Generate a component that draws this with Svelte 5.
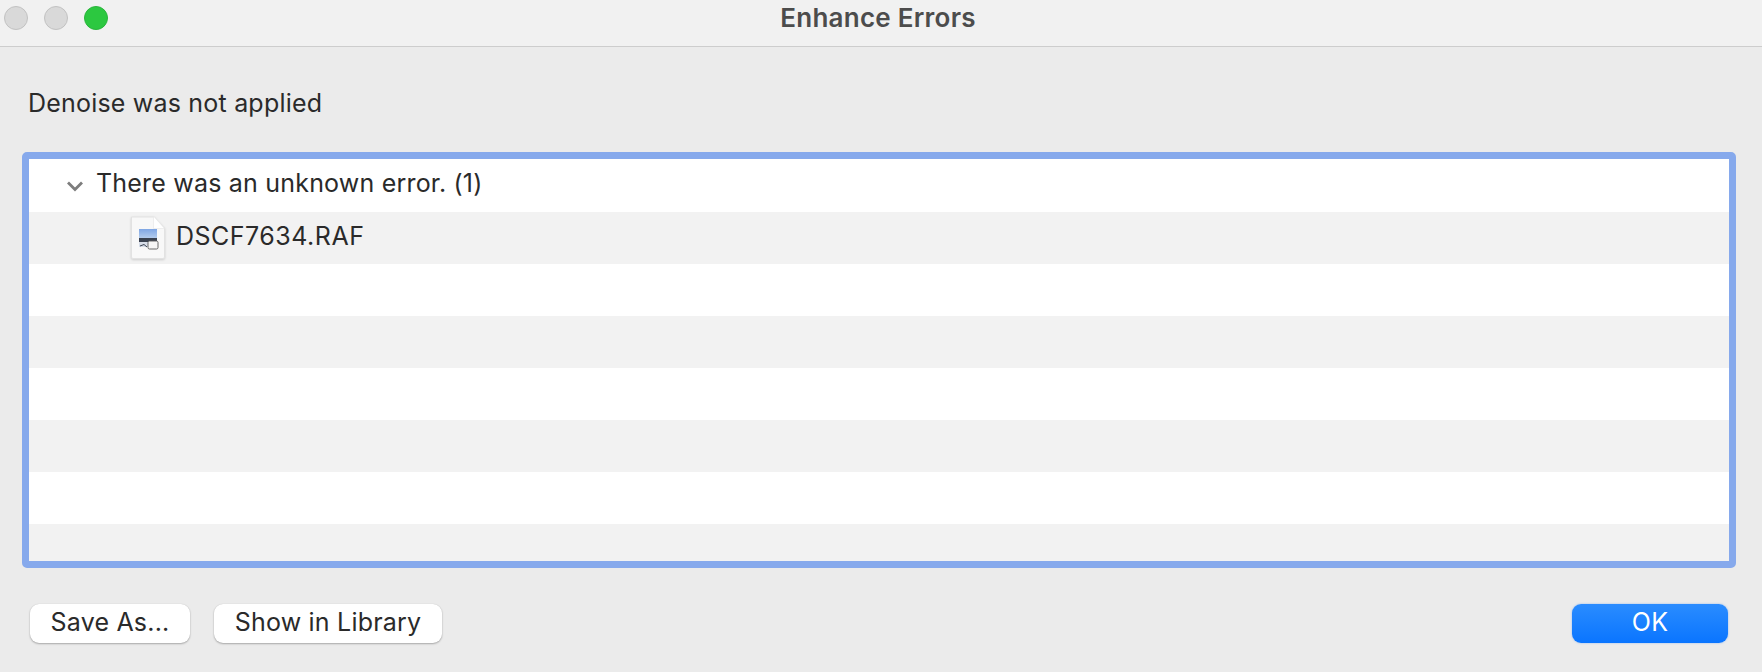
<script>
	const rows = [
		{ kind: 'group', label: 'There was an unknown error. (1)' },
		{ kind: 'file', label: 'DSCF7634.RAF' },
		{}, {}, {}, {}, {}, {}
	];
</script>

<main class="window">
	<header class="titlebar">
		<div class="lights">
			<span class="light"></span>
			<span class="light"></span>
			<span class="light green"></span>
		</div>
		<h1>Enhance Errors</h1>
	</header>

	<p class="message">Denoise was not applied</p>

	<section class="list">
		{#each rows as row, i}
			<div class="row" class:alt={i % 2 === 1}>
				{#if row.kind === 'group'}
					<svg class="chevron" width="18" height="12" viewBox="0 0 18 12">
						<path d="M2 2.5 L9 9.5 L16 2.5" fill="none" stroke="#7d7d7d" stroke-width="2.8" />
					</svg>
					<span class="group-label">{row.label}</span>
				{:else if row.kind === 'file'}
					<svg class="file" width="36" height="44" viewBox="0 0 36 44">
						<defs>
							<linearGradient id="sky" x1="0" y1="0" x2="0" y2="1">
								<stop offset="0" stop-color="#7fa6e4" />
								<stop offset="1" stop-color="#b9d0ee" />
							</linearGradient>
						</defs>
						<path d="M1.5 1 H24 L34.5 12 V41 a1.5 1.5 0 0 1 -1.5 1.5 H3 A1.5 1.5 0 0 1 1.5 41 Z" fill="#f8f8f8" stroke="#e2e2e2" stroke-width="1" />
						<path d="M23.5 0 V12.5 H34.5 Z" fill="#ffffff" stroke="#e4e4e4" stroke-width="0.6" />
						<rect x="9" y="13" width="18" height="10" fill="url(#sky)" />
						<rect x="9" y="22" width="18" height="4" fill="#3a4250" />
						<rect x="9" y="26" width="18" height="5" fill="#d7dde8" />
						<rect x="18" y="25" width="10" height="8" rx="1.5" fill="#f6f6f6" stroke="#5a5a5a" stroke-width="0.9" />
						<path d="M10 30 L14 28.5 L17 31" fill="none" stroke="#3a4250" stroke-width="1" />
					</svg>
					<span class="file-label">{row.label}</span>
				{/if}
			</div>
		{/each}
	</section>

	<footer class="actions">
		<div class="left">
			<button class="save">Save As...</button>
			<button class="show">Show in Library</button>
		</div>
		<button class="ok">OK</button>
	</footer>
</main>

<style>
	:global(body) {
		margin: 0;
		background: #ebebeb;
	}

	.window {
		width: 1762px;
		height: 672px;
		overflow: hidden;
		background: #ebebeb;
		font-family: Inter, "Liberation Sans", sans-serif;
		color: #2a2a2a;
	}

	.titlebar {
		height: 46px;
		border-bottom: 1px solid #cdcdcd;
		background: #f1f1f1;
		display: flex;
		align-items: center;
		justify-content: center;
		position: relative;
	}

	.lights {
		position: absolute;
		left: 4px;
		top: 6px;
		display: flex;
		gap: 16px;
	}

	.light {
		width: 22px;
		height: 22px;
		border-radius: 50%;
		background: #d9d9d9;
		border: 1px solid #c2c2c2;
	}

	.light.green {
		background: #2cc840;
		border-color: #2ab53c;
	}

	h1 {
		margin: -12px 6px 0 0;
		font-size: 26px;
		font-weight: 600;
		letter-spacing: 0.25px;
		color: #4c4c4c;
	}

	.message {
		margin: 0;
		padding: 39px 0 0 28px;
		height: 66px;
		font-size: 25px;
		letter-spacing: 0.2px;
		line-height: 34px;
	}

	.list {
		margin-left: 22px;
		width: 1714px;
		height: 416px;
		box-sizing: border-box;
		border: 7px solid #86a9ec;
		border-radius: 5px;
		background: #f2f2f2;
		overflow: hidden;
	}

	.row {
		height: 52px;
		background: #ffffff;
		display: flex;
		align-items: center;
		font-size: 25px;
		letter-spacing: 0.2px;
	}

	.row:first-child {
		height: 53px;
	}

	.row.alt {
		background: #f2f2f2;
	}

	.chevron {
		margin-left: 37px;
	}

	.group-label {
		margin-left: 12px;
		margin-top: -5px;
	}

	.file {
		margin-left: 101px;
		margin-top: 0;
		filter: drop-shadow(0 1px 1px rgba(0, 0, 0, 0.15));
	}

	.file-label {
		margin-left: 10px;
		margin-top: -5px;
		letter-spacing: 0.5px;
	}

	.actions {
		margin-top: 36px;
		padding: 0 34px 0 30px;
		display: flex;
		justify-content: space-between;
	}

	.left {
		display: flex;
		gap: 24px;
	}

	button {
		height: 39px;
		padding: 0 0 3px;
		border: none;
		border-radius: 9px;
		background: #ffffff;
		font-family: inherit;
		font-size: 25px;
		letter-spacing: 0.2px;
		color: #2a2a2a;
		box-shadow: 0 1px 2px rgba(0, 0, 0, 0.28), 0 0 1px rgba(0, 0, 0, 0.15);
	}

	.save {
		width: 160px;
	}

	.show {
		width: 228px;
	}

	.ok {
		width: 156px;
		background: linear-gradient(#2a8cff, #0a75ff);
		color: #ffffff;
		box-shadow: 0 0 2px rgba(40, 130, 255, 0.5);
	}
</style>
